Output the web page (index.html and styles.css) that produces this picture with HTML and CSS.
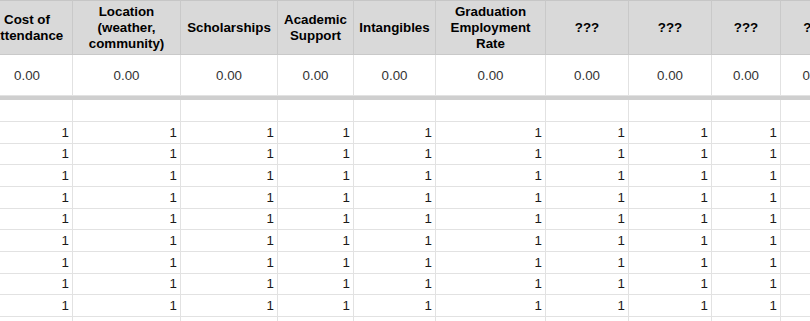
FILE: index.html
```html
<!DOCTYPE html>
<html>
<head>
<meta charset="utf-8">
<link rel="stylesheet" href="styles.css">
</head>
<body>
<div class="viewport">
  <div class="sheet">
    <div class="cell head">Cost of Attendance</div>
    <div class="cell head">Location (weather, community)</div>
    <div class="cell head">Scholarships</div>
    <div class="cell head">Academic Support</div>
    <div class="cell head">Intangibles</div>
    <div class="cell head">Graduation Employment Rate</div>
    <div class="cell head">???</div>
    <div class="cell head">???</div>
    <div class="cell head">???</div>
    <div class="cell head">???</div>

    <div class="cell val">0.00</div>
    <div class="cell val">0.00</div>
    <div class="cell val">0.00</div>
    <div class="cell val">0.00</div>
    <div class="cell val">0.00</div>
    <div class="cell val">0.00</div>
    <div class="cell val">0.00</div>
    <div class="cell val">0.00</div>
    <div class="cell val">0.00</div>
    <div class="cell val">0.00</div>

    <div class="band"></div>

    <div class="cell"></div><div class="cell"></div><div class="cell"></div><div class="cell"></div><div class="cell"></div>
    <div class="cell"></div><div class="cell"></div><div class="cell"></div><div class="cell"></div><div class="cell"></div>

    <div class="cell num">1</div><div class="cell num">1</div><div class="cell num">1</div><div class="cell num">1</div><div class="cell num">1</div><div class="cell num">1</div><div class="cell num">1</div><div class="cell num">1</div><div class="cell num">1</div><div class="cell num">1</div>
    <div class="cell num">1</div><div class="cell num">1</div><div class="cell num">1</div><div class="cell num">1</div><div class="cell num">1</div><div class="cell num">1</div><div class="cell num">1</div><div class="cell num">1</div><div class="cell num">1</div><div class="cell num">1</div>
    <div class="cell num">1</div><div class="cell num">1</div><div class="cell num">1</div><div class="cell num">1</div><div class="cell num">1</div><div class="cell num">1</div><div class="cell num">1</div><div class="cell num">1</div><div class="cell num">1</div><div class="cell num">1</div>
    <div class="cell num">1</div><div class="cell num">1</div><div class="cell num">1</div><div class="cell num">1</div><div class="cell num">1</div><div class="cell num">1</div><div class="cell num">1</div><div class="cell num">1</div><div class="cell num">1</div><div class="cell num">1</div>
    <div class="cell num">1</div><div class="cell num">1</div><div class="cell num">1</div><div class="cell num">1</div><div class="cell num">1</div><div class="cell num">1</div><div class="cell num">1</div><div class="cell num">1</div><div class="cell num">1</div><div class="cell num">1</div>
    <div class="cell num">1</div><div class="cell num">1</div><div class="cell num">1</div><div class="cell num">1</div><div class="cell num">1</div><div class="cell num">1</div><div class="cell num">1</div><div class="cell num">1</div><div class="cell num">1</div><div class="cell num">1</div>
    <div class="cell num">1</div><div class="cell num">1</div><div class="cell num">1</div><div class="cell num">1</div><div class="cell num">1</div><div class="cell num">1</div><div class="cell num">1</div><div class="cell num">1</div><div class="cell num">1</div><div class="cell num">1</div>
    <div class="cell num">1</div><div class="cell num">1</div><div class="cell num">1</div><div class="cell num">1</div><div class="cell num">1</div><div class="cell num">1</div><div class="cell num">1</div><div class="cell num">1</div><div class="cell num">1</div><div class="cell num">1</div>
    <div class="cell num">1</div><div class="cell num">1</div><div class="cell num">1</div><div class="cell num">1</div><div class="cell num">1</div><div class="cell num">1</div><div class="cell num">1</div><div class="cell num">1</div><div class="cell num">1</div><div class="cell num">1</div>
    <div class="cell num">1</div><div class="cell num">1</div><div class="cell num">1</div><div class="cell num">1</div><div class="cell num">1</div><div class="cell num">1</div><div class="cell num">1</div><div class="cell num">1</div><div class="cell num">1</div><div class="cell num">1</div>
  </div>
</div>
</body>
</html>
```

FILE: styles.css
```css
html, body {
  margin: 0;
  padding: 0;
  background: #ffffff;
  overflow: hidden;
}

.viewport {
  width: 810px;
  height: 321px;
  overflow: hidden;
}

.sheet {
  display: grid;
  grid-template-columns: 91px 108px 97px 76px 82px 110px 83px 83px 69px 70px;
  grid-template-rows: 55px 41px 4px 22px repeat(10, 21.667px);
  margin-left: -18px;
  width: max-content;
  font-family: "Liberation Sans", Arial, sans-serif;
  font-size: 13.333px;
  color: #222222;
}

.cell {
  box-sizing: border-box;
  border-right: 1px solid #e2e2e2;
  border-bottom: 1px solid #e2e2e2;
  padding: 0 3px;
  display: flex;
  align-items: center;
  overflow: hidden;
  white-space: nowrap;
}

.head {
  background: #d9d9d9;
  border-top: 1px solid #c6c6c6;
  border-right-color: #c9c9c9;
  border-bottom-color: #c9c9c9;
  font-weight: bold;
  color: #000000;
  justify-content: center;
  text-align: center;
  white-space: normal;
  line-height: 16px;
}

.val {
  justify-content: center;
  color: #333333;
}

.band {
  grid-column: 1 / -1;
  background: #cfcfcf;
}

.num {
  justify-content: flex-end;
  color: #1a1a1a;
}
```
